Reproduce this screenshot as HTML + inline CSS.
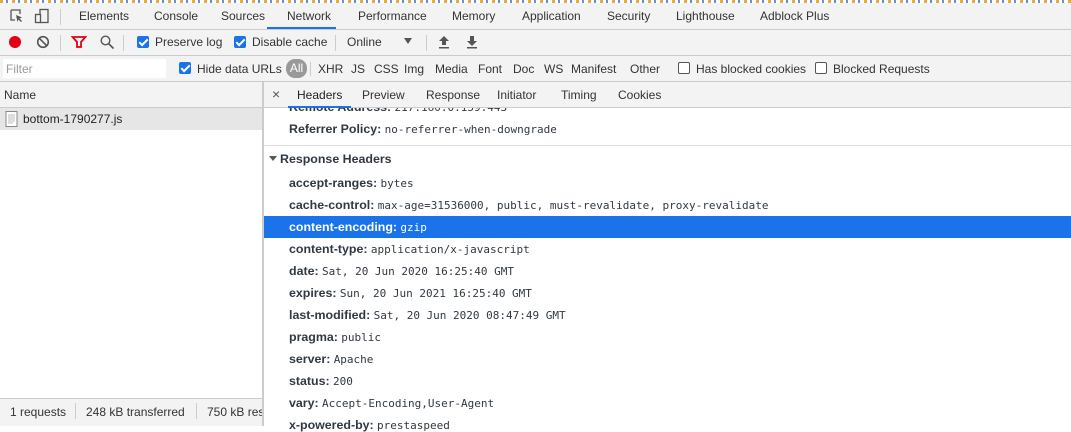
<!DOCTYPE html>
<html><head><style>
*{margin:0;padding:0;box-sizing:border-box}
body{width:1071px;height:426px;overflow:hidden;background:#fff;font-family:"Liberation Sans",sans-serif;font-size:12px;color:#333;position:relative}
.a{position:absolute;white-space:nowrap}
.bar{position:absolute;left:0;width:1071px;background:#f3f3f3;border-bottom:1px solid #cbcbcb}
.cb{position:absolute;width:12px;height:12px;border-radius:2px;background:#1a73e8}
.cb:after{content:"";position:absolute;left:4px;top:1px;width:3px;height:7px;border:solid #fff;border-width:0 2px 2px 0;transform:rotate(45deg)}
.ucb{position:absolute;width:12px;height:12px;border:1px solid #555;border-radius:2px;background:#fff}
.sep{position:absolute;width:1px;background:#ccc}
.k{font-weight:bold;color:#303942;font-size:12.4px}
.v{font-family:"DejaVu Sans Mono",monospace;font-size:11px;color:#303942}
.row{position:absolute;left:289px;white-space:nowrap}
</style></head><body>
<div class="a" style="left:0;top:0;width:1071px;height:3px;background:repeating-linear-gradient(90deg,#e8a94a 0 3px,#fff 3px 6px,#6a8fd8 6px 8px,#fff 8px 12px)"></div>
<div class="bar" style="top:3px;height:27px"></div>
<svg class="a" style="left:8px;top:8px" width="16" height="16" viewBox="0 0 16 16"><path d="M3 2h9v4M3 2v10h4" fill="none" stroke="#555" stroke-width="1.3"/><path d="M8 7l6 2.5-2.5 1 2.5 2.5-1 1-2.5-2.5-1 2.5z" fill="#555"/></svg>
<svg class="a" style="left:34px;top:8px" width="16" height="16" viewBox="0 0 16 16"><rect x="6" y="1.5" width="8" height="13" fill="none" stroke="#555" stroke-width="1.3"/><rect x="1.5" y="6.5" width="5" height="8" fill="#f3f3f3" stroke="#555" stroke-width="1.3"/></svg>
<div class="sep" style="left:60px;top:9px;height:16px"></div>
<div class="a" style="left:79px;top:9px;color:#333">Elements</div>
<div class="a" style="left:154px;top:9px">Console</div>
<div class="a" style="left:221px;top:9px">Sources</div>
<div class="a" style="left:287px;top:9px;color:#333">Network</div>
<div class="a" style="left:267px;top:27px;width:69px;height:2px;background:#1a73e8"></div>
<div class="a" style="left:358px;top:9px">Performance</div>
<div class="a" style="left:452px;top:9px">Memory</div>
<div class="a" style="left:522px;top:9px">Application</div>
<div class="a" style="left:607px;top:9px">Security</div>
<div class="a" style="left:676px;top:9px">Lighthouse</div>
<div class="a" style="left:760px;top:9px">Adblock Plus</div>

<div class="bar" style="top:30px;height:26px"></div>
<div class="a" style="left:9px;top:36px;width:12px;height:12px;border-radius:50%;background:#e30013"></div>
<svg class="a" style="left:36px;top:35px" width="14" height="14" viewBox="0 0 14 14"><circle cx="7" cy="7" r="5.3" fill="none" stroke="#555" stroke-width="1.6"/><path d="M3.3 3.3l7.4 7.4" stroke="#555" stroke-width="1.6"/></svg>
<div class="sep" style="left:60px;top:35px;height:16px"></div>
<svg class="a" style="left:71px;top:35px" width="16" height="14" viewBox="0 0 16 14"><path d="M1.5 2h13l-4.5 5v5h-4v-5z" fill="none" stroke="#e30013" stroke-width="1.8"/></svg>
<svg class="a" style="left:99px;top:34px" width="16" height="16" viewBox="0 0 16 16"><circle cx="6.5" cy="6.5" r="4.3" fill="none" stroke="#555" stroke-width="1.4"/><path d="M9.5 9.5l5 5" stroke="#555" stroke-width="1.6"/></svg>
<div class="sep" style="left:123px;top:35px;height:16px"></div>
<div class="cb" style="left:137px;top:36px"></div>
<div class="a" style="left:155px;top:35px">Preserve log</div>
<div class="cb" style="left:234px;top:36px"></div>
<div class="a" style="left:252px;top:35px">Disable cache</div>
<div class="sep" style="left:335px;top:35px;height:16px"></div>
<div class="a" style="left:347px;top:35px">Online</div>
<div class="a" style="left:404px;top:38px;border:4px solid transparent;border-top:6px solid #555;border-bottom:0"></div>
<div class="sep" style="left:426px;top:35px;height:16px"></div>
<svg class="a" style="left:437px;top:35px" width="14" height="14" viewBox="0 0 14 14"><path d="M7 1l5 5H9v4H5V6H2z M2 12h10v1.5H2z" fill="#555"/></svg>
<svg class="a" style="left:465px;top:35px" width="14" height="14" viewBox="0 0 14 14"><path d="M7 11l5-5H9V1H5v5H2z M2 12h10v1.5H2z" fill="#555"/></svg>

<div class="bar" style="top:56px;height:26px"></div>
<div class="a" style="left:3px;top:59px;width:163px;height:19px;background:#fff"></div>
<div class="a" style="left:6px;top:62px;color:#999">Filter</div>
<div class="cb" style="left:179px;top:62px"></div>
<div class="a" style="left:197px;top:62px">Hide data URLs</div>
<div class="a" style="left:286px;top:59px;width:21px;height:19px;border-radius:9px;background:#999;color:#fff;text-align:center;line-height:19px">All</div>
<div class="sep" style="left:310px;top:62px;height:14px"></div>
<div class="a" style="left:318px;top:62px">XHR</div>
<div class="a" style="left:351px;top:62px">JS</div>
<div class="a" style="left:374px;top:62px">CSS</div>
<div class="a" style="left:404px;top:62px">Img</div>
<div class="a" style="left:435px;top:62px">Media</div>
<div class="a" style="left:478px;top:62px">Font</div>
<div class="a" style="left:513px;top:62px">Doc</div>
<div class="a" style="left:544px;top:62px">WS</div>
<div class="a" style="left:571px;top:62px">Manifest</div>
<div class="a" style="left:630px;top:62px">Other</div>
<div class="ucb" style="left:678px;top:62px"></div>
<div class="a" style="left:696px;top:62px">Has blocked cookies</div>
<div class="ucb" style="left:815px;top:62px"></div>
<div class="a" style="left:833px;top:62px">Blocked Requests</div>

<!-- left panel -->
<div class="a" style="left:0;top:82px;width:262px;height:26px;background:#f3f3f3;border-bottom:1px solid #cbcbcb"></div>
<div class="a" style="left:4px;top:88px">Name</div>
<div class="a" style="left:0;top:108px;width:262px;height:22px;background:#e6e6e6"></div>
<svg class="a" style="left:5px;top:111px" width="13" height="16" viewBox="0 0 13 16"><rect x="1" y="0.5" width="11" height="15" fill="#fff" stroke="#888"/><path d="M3 4h7M3 6h7M3 8h7M3 10h7M3 12h5" stroke="#bbb"/></svg>
<div class="a" style="left:23px;top:112px;color:#222">bottom-1790277.js</div>
<div class="a" style="left:0;top:398px;width:262px;height:28px;background:#f3f3f3;border-top:1px solid #cbcbcb"></div>
<div class="a" style="left:10px;top:405px">1 requests</div>
<div class="sep" style="left:75px;top:403px;height:16px"></div>
<div class="a" style="left:86px;top:405px">248 kB transferred</div>
<div class="sep" style="left:196px;top:403px;height:16px"></div>
<div class="a" style="left:207px;top:405px;width:55px;overflow:hidden">750 kB resources</div>
<div class="a" style="left:262px;top:82px;width:2px;height:344px;background:#ccc"></div>

<!-- right panel -->
<div class="a" style="left:264px;top:108px;width:807px;height:8px;overflow:hidden"><div class="a" style="left:25px;top:-8px"><span class="k">Remote Address:</span> <span class="v">217.160.0.159:443</span></div></div>
<div class="a" style="left:264px;top:82px;width:807px;height:26px;background:#f3f3f3;border-bottom:1px solid #cbcbcb"></div>
<div class="a" style="left:272px;top:86px;font-size:14px;color:#555">×</div>
<div class="a" style="left:297px;top:88px;color:#222">Headers</div>
<div class="a" style="left:288px;top:106px;width:63px;height:2px;background:#1a73e8"></div>
<div class="a" style="left:362px;top:88px">Preview</div>
<div class="a" style="left:426px;top:88px">Response</div>
<div class="a" style="left:497px;top:88px">Initiator</div>
<div class="a" style="left:561px;top:88px">Timing</div>
<div class="a" style="left:618px;top:88px">Cookies</div>

<div class="row" style="top:122px"><span class="k">Referrer Policy:</span> <span class="v">no-referrer-when-downgrade</span></div>
<div class="a" style="left:264px;top:145px;width:807px;height:1px;background:#ddd"></div>
<div class="a" style="left:269px;top:156px;border:4px solid transparent;border-top:5px solid #555;border-bottom:0"></div>
<div class="a k" style="left:280px;top:152px">Response Headers</div>
<div class="row" style="top:176px"><span class="k">accept-ranges:</span> <span class="v">bytes</span></div>
<div class="row" style="top:198px"><span class="k">cache-control:</span> <span class="v">max-age=31536000, public, must-revalidate, proxy-revalidate</span></div>
<div class="a" style="left:264px;top:216px;width:807px;height:22px;background:#1a73e8"></div>
<div class="row" style="top:220px;color:#fff"><span class="k" style="color:#fff">content-encoding:</span> <span class="v" style="color:#fff">gzip</span></div>
<div class="row" style="top:242px"><span class="k">content-type:</span> <span class="v">application/x-javascript</span></div>
<div class="row" style="top:264px"><span class="k">date:</span> <span class="v">Sat, 20 Jun 2020 16:25:40 GMT</span></div>
<div class="row" style="top:286px"><span class="k">expires:</span> <span class="v">Sun, 20 Jun 2021 16:25:40 GMT</span></div>
<div class="row" style="top:308px"><span class="k">last-modified:</span> <span class="v">Sat, 20 Jun 2020 08:47:49 GMT</span></div>
<div class="row" style="top:330px"><span class="k">pragma:</span> <span class="v">public</span></div>
<div class="row" style="top:352px"><span class="k">server:</span> <span class="v">Apache</span></div>
<div class="row" style="top:374px"><span class="k">status:</span> <span class="v">200</span></div>
<div class="row" style="top:396px"><span class="k">vary:</span> <span class="v">Accept-Encoding,User-Agent</span></div>
<div class="row" style="top:418px"><span class="k">x-powered-by:</span> <span class="v">prestaspeed</span></div>
</body></html>
